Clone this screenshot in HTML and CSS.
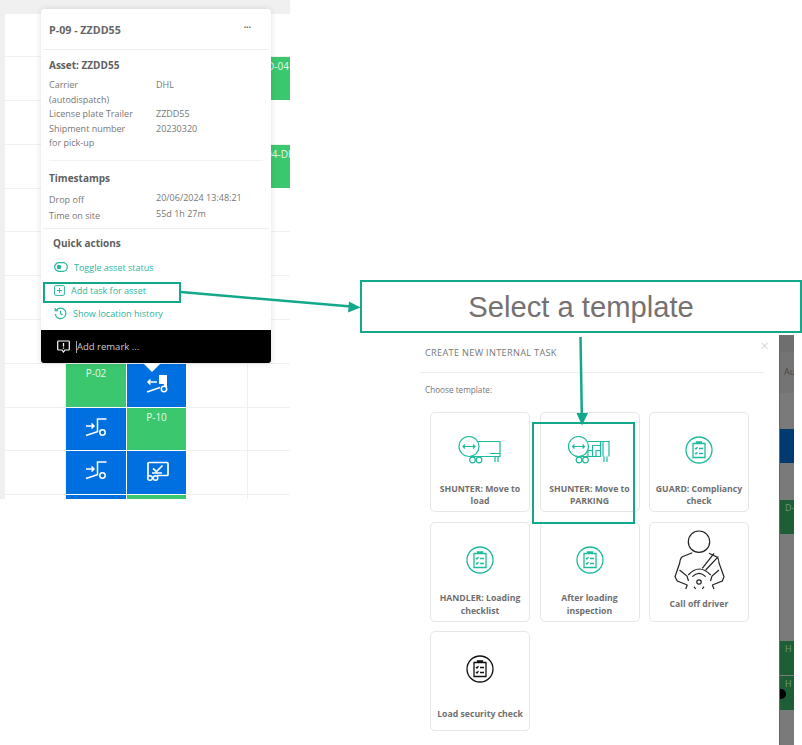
FILE: index.html
```html
<!DOCTYPE html>
<html lang="en">
<head>
  <meta charset="UTF-8">
  <meta name="viewport" content="width=device-width, initial-scale=1.0">
  <title>Create internal task</title>
  <link rel="stylesheet" href="styles.css">
</head>
<body>
  <svg class="defs" width="0" height="0">
    <symbol id="i-check" viewBox="0 0 28 28">
      <circle cx="14" cy="14" r="13" fill="none" stroke="currentColor" stroke-width="1.300"/>
      <path d="M8 7.500h12v14H8zM11.500 7.500V6h5v1.500M10 12l1 1 1.500-1.800M14 12.500h4M10 17l1 1 1.500-1.800M14 17.500h4" fill="none" stroke="currentColor" stroke-width="1.300"/>
    </symbol>
    <symbol id="i-trailer" viewBox="0 0 46 30">
      <path d="M20 5.500h23v15H12M33 17.500h10M38 20.500v5.500M41 20.500v5.500" fill="none" stroke="currentColor" stroke-width="1.200"/>
      <circle cx="12" cy="10.500" r="10" fill="#fff" stroke="currentColor" stroke-width="1.200"/>
      <path d="M6 10.500h12M8 8.500l-2 2 2 2M16 8.500l2 2-2 2" fill="none" stroke="currentColor" stroke-width="1.200"/>
      <circle cx="15.500" cy="24" r="2.800" fill="none" stroke="currentColor" stroke-width="1.200"/>
      <circle cx="22" cy="24" r="2.800" fill="none" stroke="currentColor" stroke-width="1.200"/>
    </symbol>
    <symbol id="i-parking" viewBox="0 0 46 30">
      <path d="M21 5.500h21v15M33.500 5.500v15M36 5.500v15M8 20.500h26M21 20.500v-6h4.500v-5h8M25.500 20.500v-6M29 20.500v-6h4.500M37 20.500v5.500M40 20.500v5.500" fill="none" stroke="currentColor" stroke-width="1.200"/>
      <circle cx="11.500" cy="10.500" r="10" fill="#fff" stroke="currentColor" stroke-width="1.200"/>
      <path d="M5.500 10.500h12M7.500 8.500l-2 2 2 2M15.500 8.500l2 2-2 2" fill="none" stroke="currentColor" stroke-width="1.200"/>
      <circle cx="12" cy="24" r="2.800" fill="none" stroke="currentColor" stroke-width="1.200"/>
      <circle cx="18.500" cy="24" r="2.800" fill="none" stroke="currentColor" stroke-width="1.200"/>
    </symbol>
    <symbol id="i-hook" viewBox="0 0 24 22">
      <path d="M2 9h8M7.500 6.500 10 9l-2.500 2.500M22.500 2h-9v13M2 18.500l12-4" fill="none" stroke="#fff" stroke-width="1.500"/>
      <circle cx="18.500" cy="15.500" r="2.700" fill="none" stroke="#fff" stroke-width="1.500"/>
    </symbol>
  </svg>

  <div class="yard">
    <div class="yard-grid">
      <div></div><div></div><div></div><div></div><div></div>
      <div></div><div></div><div></div><div></div><div class="cell-green">D-04</div>
      <div></div><div></div><div></div><div></div><div></div>
      <div></div><div></div><div></div><div></div><div class="cell-green">D-04-DHL</div>
      <div></div><div></div><div></div><div></div><div></div>
      <div></div><div></div><div></div><div></div><div></div>
      <div></div><div></div><div></div><div></div><div></div>
      <div></div><div></div><div></div><div></div><div></div>
      <div></div>
      <div class="cell-green">P-02</div>
      <div class="cell-blue">
        <svg class="cell-icon" viewBox="0 0 24 22">
          <path d="M3 9h9M5.500 6.500 3 9l2.500 2.500" fill="none" stroke="#fff" stroke-width="1.500"/>
          <path d="M14 2h8v13h-3v-4h-5z" fill="#fff"/>
          <path d="M2 19l13-4.500" fill="none" stroke="#fff" stroke-width="1.500"/>
          <circle cx="19" cy="16" r="2.700" fill="#0070e0" stroke="#fff" stroke-width="1.500"/>
        </svg>
      </div>
      <div></div><div></div>
      <div></div>
      <div class="cell-blue"><svg class="cell-icon"><use href="#i-hook"/></svg></div>
      <div class="cell-green">P-10</div>
      <div></div><div></div>
      <div></div>
      <div class="cell-blue"><svg class="cell-icon"><use href="#i-hook"/></svg></div>
      <div class="cell-blue">
        <svg class="cell-icon" viewBox="0 0 24 22">
          <path d="M3 16V3.500A1 1 0 0 1 4 2.500h18a1 1 0 0 1 1 1v11a1 1 0 0 1-1 1H12" fill="none" stroke="#fff" stroke-width="1.700"/>
          <path d="M8 8.500l3.500 3 6-6M7 13h10" fill="none" stroke="#fff" stroke-width="1.700"/>
          <circle cx="5" cy="18" r="2.300" fill="none" stroke="#fff" stroke-width="1.500"/>
          <circle cx="10.500" cy="18" r="2.300" fill="none" stroke="#fff" stroke-width="1.500"/>
        </svg>
      </div>
      <div></div><div></div>
      <div></div>
      <div class="cell-blue"></div>
      <div class="cell-green"></div>
      <div></div><div></div>
    </div>

    <div class="popup">
      <div class="popup-head">
        <strong>P-09 - ZZDD55</strong>
        <span class="dots">•••</span>
      </div>
      <div class="popup-section">
        <h3>Asset: ZZDD55</h3>
        <dl class="facts">
          <dt>Carrier (autodispatch)</dt><dd>DHL</dd>
          <dt>License plate Trailer</dt><dd>ZZDD55</dd>
          <dt>Shipment number for pick-up</dt><dd>20230320</dd>
        </dl>
      </div>
      <div class="popup-section times">
        <h3>Timestamps</h3>
        <dl class="facts">
          <dt>Drop off</dt><dd>20/06/2024 13:48:21</dd>
          <dt>Time on site</dt><dd>55d 1h 27m</dd>
        </dl>
      </div>
      <div class="actions">
        <h3>Quick actions</h3>
        <a class="action">
          <svg width="14" height="10" viewBox="0 0 14 10"><rect x=".7" y=".7" width="12.600" height="8.600" rx="4.300" fill="none" stroke="currentColor" stroke-width="1.200"/><circle cx="5" cy="5" r="2.300" fill="currentColor"/></svg>
          Toggle asset status
        </a>
        <a class="action add">
          <svg width="11" height="11" viewBox="0 0 11 11"><rect x=".6" y=".6" width="9.800" height="9.800" rx="1" fill="none" stroke="currentColor"/><path d="M5.500 3v5M3 5.500h5" stroke="currentColor"/></svg>
          Add task for asset
        </a>
        <a class="action hist">
          <svg width="13" height="13" viewBox="0 0 13 13"><path d="M2.300 3.200A5.300 5.300 0 1 1 1.300 7M1.200 1v2.700h2.700M6.500 3.700v3l2 1.300" fill="none" stroke="currentColor" stroke-width="1.200"/></svg>
          Show location history
        </a>
      </div>
      <div class="remark">
        <svg width="13" height="13" viewBox="0 0 13 13"><path d="M1.500 1h10a.8.8 0 0 1 .8.8v7.400a.8.8 0 0 1-.8.8H8L6.500 12 5 10H1.500a.8.8 0 0 1-.8-.8V1.800a.8.8 0 0 1 .8-.8z" fill="none" stroke="#fff" stroke-width="1.200"/><path d="M6.500 3v3.500M6.500 7.500v1.300" stroke="#fff" stroke-width="1.300"/></svg>
        <span class="caret"></span>
        <span>Add remark ...</span>
      </div>
      <span class="pointer"></span>
    </div>
  </div>

  <div class="callout">Select a template</div>

  <div class="modal">
    <div class="modal-head">
      <span>CREATE NEW INTERNAL TASK</span>
      <span class="close">×</span>
    </div>
    <p class="choose">Choose template:</p>
    <div class="templates">
      <div class="template">
        <svg class="t-icon wide"><use href="#i-trailer"/></svg>
        <div class="t-label">SHUNTER: Move to load</div>
      </div>
      <div class="template">
        <svg class="t-icon wide"><use href="#i-parking"/></svg>
        <div class="t-label">SHUNTER: Move to PARKING</div>
      </div>
      <div class="template">
        <svg class="t-icon"><use href="#i-check"/></svg>
        <div class="t-label">GUARD: Compliancy check</div>
      </div>
      <div class="template">
        <svg class="t-icon"><use href="#i-check"/></svg>
        <div class="t-label">HANDLER: Loading checklist</div>
      </div>
      <div class="template">
        <svg class="t-icon"><use href="#i-check"/></svg>
        <div class="t-label">After loading inspection</div>
      </div>
      <div class="template photo">
        <svg class="driver" viewBox="0 0 60 60">
          <g fill="none" stroke="#222" stroke-width="1.200">
            <circle cx="30" cy="11.700" r="10.700"/>
            <path d="M23.300 22.700 13.300 26.700C11.500 28 11 30 10.700 33L6 46.700 8.300 51 18.300 55"/>
            <path d="M40 23.300 48.300 27.300C50 29 50 31 50 33L55 46.700 53.300 51 43.300 55"/>
            <path d="M33.300 38.300 45 23.300M36.700 40 49.300 26.700"/>
            <path d="M19.300 45Q30 33 41.700 45M23.300 46.700Q30 40 36.700 46.700"/>
            <path d="M10.500 40 18 46 19.500 51M50 40 43 46 41.500 51"/>
            <circle cx="30" cy="52" r="2.200"/>
            <path d="M18.300 55 16.700 59M25 56.700 26.700 59M35 56.700 33.300 59M43.300 55 45 59"/>
          </g>
        </svg>
        <div class="t-label">Call off driver</div>
      </div>
      <div class="template black">
        <svg class="t-icon"><use href="#i-check"/></svg>
        <div class="t-label">Load security check</div>
      </div>
    </div>
  </div>

  <div class="backdrop">
    <div class="b-head"></div>
    <div class="b-row">Au</div>
    <div class="b-gap"></div>
    <div class="b-blue"></div>
    <div class="b-gap2"></div>
    <div class="b-green">D-</div>
    <div class="b-gap3"></div>
    <div class="b-green">H</div>
    <div class="b-green b-dot">H</div>
  </div>

  <div class="mark mark-add"></div>
  <div class="mark mark-tpl"></div>

  <svg class="arrows" width="802" height="745" viewBox="0 0 802 745">
    <path d="M181 292 351 306.500M580.500 337 581.800 414" fill="none" stroke="#13a88c" stroke-width="2.500"/>
    <path d="M360.500 307.500 349 301.500 348 312.500zM582 425.500 576.500 413H588z" fill="#13a88c"/>
  </svg>
</body>
</html>
```

FILE: styles.css
```css
:root {
  --teal: #13a88c;
  --icon: #1dbb9c;
  --link: #2ab79d;
  --line: #f0f0f0;
  --text: #6f6f6f;
  --blue: #0070e0;
  --green: #3bc76e;
}
* { box-sizing: border-box; }
html, body {
  margin: 0;
  height: 745px;
  overflow: hidden;
}
body {
  position: relative;
  background: #fff;
  font-family: 'Open Sans', sans-serif;
  color: var(--text);
}
.defs { position: absolute; }

/* left screenshot: yard and popup */
.yard {
  position: absolute;
  left: 0;
  top: 0;
  width: 290px;
  height: 499px;
  overflow: hidden;
  background: #f0f0f0;
  padding: 13.5px 0 0 5px;
}
.yard-grid {
  display: grid;
  grid-template-columns: 61px 61px 60px 61px 61px;
  grid-auto-rows: 43.8px;
  background: #fff;
}
.yard-grid > div {
  border-right: 1.5px solid var(--line);
  border-bottom: 1.5px solid var(--line);
  font-size: 10px;
  line-height: 13px;
  padding-top: 3px;
  text-align: center;
  white-space: nowrap;
  color: #e6f7ec;
}
.yard-grid > .cell-green, .yard-grid > .cell-blue {
  border-color: #fff;
  border-width: 0 1.5px 1.5px 0;
}
.yard-grid > .cell-green { background: var(--green); }
.yard-grid > .cell-blue { background: var(--blue); padding-top: 9px; }
.cell-icon {
  display: block;
  width: 24px;
  height: 22px;
  margin: 0 auto;
}

.popup {
  position: absolute;
  left: 41px;
  top: 9px;
  width: 230px;
  height: 354px;
  background: #fff;
  border-radius: 3px;
  box-shadow: 0 0 6px rgba(0,0,0,0.12);
  display: flex;
  flex-direction: column;
}
.popup-head {
  height: 41px;
  margin: 0 2px;
  padding: 0 6px;
  border-bottom: 1px solid #eee;
  display: flex;
  justify-content: space-between;
  font-size: 10.700px;
  line-height: 42px;
  color: #666;
}
.dots {
  font-size: 6.500px;
  line-height: 38px;
  margin-right: 12px;
}
h3 {
  margin: 0;
  font-size: 10px;
  font-weight: 700;
  line-height: 14px;
  color: #5f5f5f;
}
.popup-section {
  margin: 0 8px;
  padding-top: 8px;
}
.popup-section.times {
  border-top: 1px solid #f2f2f2;
  margin-top: 9px;
  padding-top: 10px;
}
.facts {
  display: grid;
  grid-template-columns: 88px 1fr;
  column-gap: 19px;
  margin: 6px 0 0;
  font-size: 9px;
  line-height: 14.600px;
  color: #777;
}
.facts dt, .facts dd { margin: 0; }
.times .facts { margin-top: 7px; line-height: 16px; }
.times .facts dd { margin-top: -1.500px; }
.actions {
  margin: 4px 2px 0;
  padding: 7px 10px 0;
  border-top: 1px solid #eee;
  flex: 1;
}
.actions h3 { margin-bottom: 6px; }
.action {
  display: flex;
  align-items: center;
  gap: 6px;
  height: 23px;
  padding-left: 1px;
  font-size: 9px;
  color: var(--link);
}
.remark {
  height: 33px;
  background: #000;
  border-radius: 0 0 3px 3px;
  display: flex;
  align-items: center;
  padding-left: 16px;
  font-size: 9.500px;
  color: #ccc;
}
.caret {
  width: 1px;
  height: 12px;
  background: #aaa;
  margin-left: 6px;
}
.pointer {
  position: absolute;
  left: 102px;
  top: 354px;
  border-left: 9px solid transparent;
  border-right: 9px solid transparent;
  border-top: 9px solid #fff;
}

/* annotations */
.callout {
  position: absolute;
  left: 360px;
  top: 280px;
  width: 442px;
  height: 52.500px;
  border: 2px solid var(--teal);
  background: #fff;
  font-family: 'Liberation Sans', Arial, sans-serif;
  font-size: 29.200px;
  line-height: 50px;
  text-align: center;
  color: #767171;
}
.mark {
  position: absolute;
  border: 2px solid var(--teal);
}
.mark-add { left: 43px; top: 282px; width: 138px; height: 21px; }
.mark-tpl { left: 532px; top: 422px; width: 103px; height: 102px; }
.arrows {
  position: absolute;
  left: 0;
  top: 0;
  pointer-events: none;
}

/* right screenshot: modal */
.modal {
  position: absolute;
  left: 420px;
  top: 335px;
  width: 359px;
  height: 410px;
  background: #fff;
}
.modal-head {
  position: relative;
  width: 344px;
  height: 38px;
  padding: 11px 0 0 5px;
  border-bottom: 1px solid #eee;
  font-size: 9.200px;
  line-height: 14px;
  letter-spacing: 0.3px;
  color: #777;
}
.close {
  position: absolute;
  right: -5px;
  top: 3px;
  font-size: 15px;
  font-weight: 300;
  color: #ccc;
}
.choose {
  margin: 10px 0 0 5px;
  font-size: 8.200px;
  line-height: 14px;
  color: #777;
}
.templates {
  display: grid;
  grid-template-columns: repeat(3, 100px);
  grid-auto-rows: 100px;
  gap: 9.500px;
  margin: 15px 0 0 10px;
}
.template {
  display: flex;
  flex-direction: column;
  align-items: center;
  border: 1.500px solid #e6e6e6;
  border-radius: 5px;
  color: var(--icon);
}
.t-icon {
  width: 28px;
  height: 28px;
  margin-top: 23px;
  flex: none;
}
.t-icon.wide { width: 46px; height: 30px; margin-bottom: -2px; }
.t-label {
  flex: 1;
  display: flex;
  align-items: center;
  justify-content: center;
  text-align: center;
  margin-top: 18px;
  padding: 0 2px;
  font-size: 8.700px;
  font-weight: 700;
  line-height: 12.500px;
  color: var(--text);
}
.template:not(.photo) .t-label { margin-bottom: 3px; }
.driver {
  width: 60px;
  height: 60px;
  margin-top: 7px;
  flex: none;
}
.photo .t-label { margin-top: 0; margin-bottom: 2px; }
.black .t-icon { color: #111; }

/* dimmed page behind the modal */
.backdrop {
  position: absolute;
  left: 779px;
  top: 335px;
  width: 15px;
  height: 410px;
  overflow: hidden;
  background: #7a7a7a;
  border-left: 1px solid #666;
  font-size: 9px;
  line-height: 14px;
  color: #444;
}
.b-head { height: 17px; background: #6f6f70; }
.b-row { height: 41px; padding: 13px 0 0 4px; background: #747474; }
.b-gap { height: 36px; }
.b-blue { height: 34px; background: #003a70; }
.b-gap2 { height: 37px; }
.b-green {
  height: 34px;
  background: #1e5e36;
  padding: 1px 0 0 5px;
  color: #6c9a78;
  margin-bottom: 1px;
}
.b-gap3 { height: 106px; }
.b-dot { position: relative; }
.b-dot::before {
  content: "";
  position: absolute;
  left: -4px;
  top: 13px;
  width: 10px;
  height: 10px;
  border-radius: 50%;
  background: #000;
}
```
